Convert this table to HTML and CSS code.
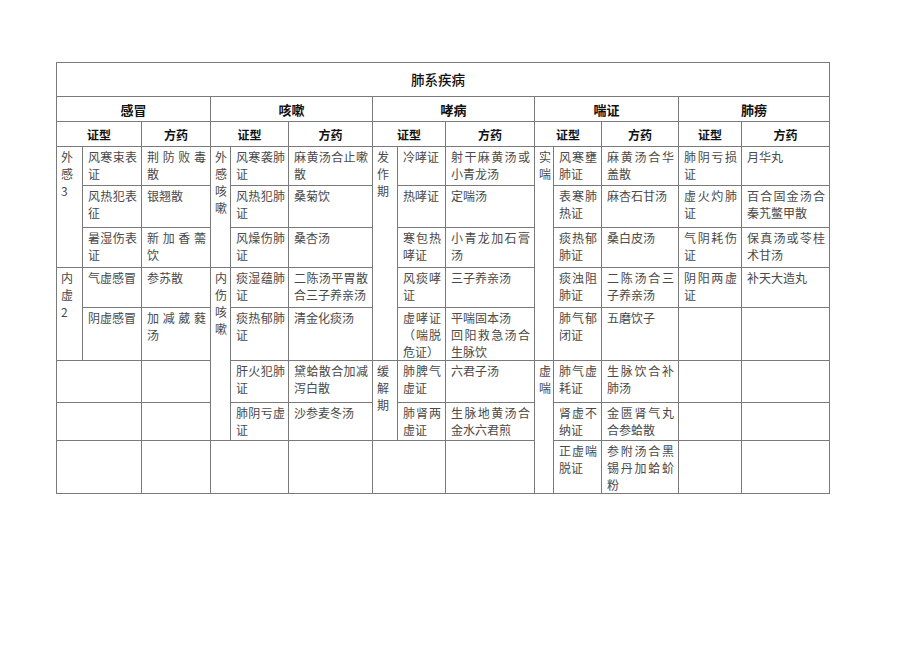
FILE: index.html
```html
<!DOCTYPE html>
<html lang="zh-CN">
<head>
<meta charset="utf-8">
<title>肺系疾病</title>
<link rel="stylesheet" href="styles.css">
</head>
<body>
<div class="page">
<table class="grid">
  <colgroup>
    <col class="w26"><col class="w59"><col class="w69">
    <col class="w20"><col class="w58"><col class="w84">
    <col class="w25"><col class="w48"><col class="w89">
    <col class="w19"><col class="w48"><col class="w77">
    <col class="w63"><col class="w88">
  </colgroup>
  <tr class="r-title"><td colspan="14" class="title">肺系疾病</td></tr>
  <tr class="r-group">
    <td colspan="3" class="gh">感冒</td>
    <td colspan="3" class="gh">咳嗽</td>
    <td colspan="3" class="gh">哮病</td>
    <td colspan="3" class="gh">喘证</td>
    <td colspan="2" class="gh">肺痨</td>
  </tr>
  <tr class="r-sub">
    <td colspan="2" class="sh">证型</td><td class="sh">方药</td>
    <td colspan="2" class="sh">证型</td><td class="sh">方药</td>
    <td colspan="2" class="sh">证型</td><td class="sh">方药</td>
    <td colspan="2" class="sh">证型</td><td class="sh">方药</td>
    <td class="sh">证型</td><td class="sh">方药</td>
  </tr>
  <tr class="r1">
    <td rowspan="3" class="nar">外感<br>3</td><td>风寒束表证</td><td>荆防败毒散</td>
    <td rowspan="3" class="nar">外感咳嗽</td><td class="tight">风寒袭肺证</td><td>麻黄汤合止嗽散</td>
    <td rowspan="5" class="nar">发作期</td><td>冷哮证</td><td>射干麻黄汤或小青龙汤</td>
    <td rowspan="5" class="nar">实喘</td><td>风寒壅肺证</td><td>麻黄汤合华盖散</td>
    <td>肺阴亏损证</td><td>月华丸</td>
  </tr>
  <tr class="r2">
    <td>风热犯表征</td><td>银翘散</td>
    <td class="tight">风热犯肺证</td><td>桑菊饮</td>
    <td>热哮证</td><td>定喘汤</td>
    <td>表寒肺热证</td><td>麻杏石甘汤</td>
    <td>虚火灼肺证</td><td>百合固金汤合秦艽鳖甲散</td>
  </tr>
  <tr class="r3">
    <td>暑湿伤表证</td><td>新加香薷饮</td>
    <td class="tight">风燥伤肺证</td><td>桑杏汤</td>
    <td>寒包热哮证</td><td>小青龙加石膏汤</td>
    <td>痰热郁肺证</td><td>桑白皮汤</td>
    <td>气阴耗伤证</td><td>保真汤或苓桂术甘汤</td>
  </tr>
  <tr class="r4">
    <td rowspan="2" class="nar">内虚<br>2</td><td>气虚感冒</td><td>参苏散</td>
    <td rowspan="4" class="nar">内伤咳嗽</td><td class="tight">痰湿蕴肺证</td><td>二陈汤平胃散合三子养亲汤</td>
    <td>风痰哮证</td><td>三子养亲汤</td>
    <td>痰浊阻肺证</td><td>二陈汤合三子养亲汤</td>
    <td>阴阳两虚证</td><td>补天大造丸</td>
  </tr>
  <tr class="r5">
    <td>阴虚感冒</td><td>加减葳蕤汤</td>
    <td class="tight">痰热郁肺证</td><td>清金化痰汤</td>
    <td>虚哮证（喘脱危证）</td><td>平喘固本汤<br>回阳救急汤合生脉饮</td>
    <td>肺气郁闭证</td><td>五磨饮子</td>
    <td></td><td></td>
  </tr>
  <tr class="r6">
    <td colspan="2"></td><td></td>
    <td class="tight">肝火犯肺证</td><td>黛蛤散合加减泻白散</td>
    <td rowspan="2" class="nar">缓解期</td><td>肺脾气虚证</td><td>六君子汤</td>
    <td rowspan="3" class="nar">虚喘</td><td>肺气虚耗证</td><td>生脉饮合补肺汤</td>
    <td></td><td></td>
  </tr>
  <tr class="r7">
    <td colspan="2"></td><td></td>
    <td class="tight">肺阴亏虚证</td><td>沙参麦冬汤</td>
    <td>肺肾两虚证</td><td>生脉地黄汤合金水六君煎</td>
    <td>肾虚不纳证</td><td>金匮肾气丸合参蛤散</td>
    <td></td><td></td>
  </tr>
  <tr class="r8">
    <td colspan="2"></td><td></td>
    <td colspan="2"></td><td></td>
    <td colspan="2"></td><td></td>
    <td>正虚喘脱证</td><td>参附汤合黑锡丹加蛤蚧粉</td>
    <td></td><td></td>
  </tr>
</table>
</div>
</body>
</html>
```
FILE: styles.css
```css
html, body {
  margin: 0;
  padding: 0;
  background: #ffffff;
}
.page {
  padding: 62px 0 0 56px;
}
.grid {
  border-collapse: collapse;
  table-layout: fixed;
  width: 774px;
  font-family: "Noto Sans CJK SC", "Noto Sans", sans-serif;
  font-size: 12px;
  line-height: 17px;
  color: #4a4a4a;
  border: 1px solid #7a7a7a;
}
.grid td {
  border: 1px solid #7a7a7a;
  padding: 1px 4px 0 5px;
  vertical-align: top;
  text-align: justify;
  overflow: visible;
}
.w26 { width: 26px; }
.w59 { width: 59px; }
.w69 { width: 69px; }
.w20 { width: 20px; }
.w58 { width: 58px; }
.w84 { width: 84px; }
.w25 { width: 25px; }
.w48 { width: 48px; }
.w89 { width: 89px; }
.w19 { width: 19px; }
.w77 { width: 77px; }
.w63 { width: 63px; }
.w88 { width: 88px; }

.r-title { height: 34px; }
.r-group { height: 25px; }
.r-sub { height: 25px; }
.r1 { height: 39px; }
.r2 { height: 42px; }
.r3 { height: 40px; }
.r4 { height: 40px; }
.r5 { height: 52px; }
.r6 { height: 42px; }
.r7 { height: 38px; }
.r8 { height: 52px; }

.grid td.title {
  text-align: center;
  vertical-align: middle;
  font-size: 13.5px;
  font-weight: 500;
  color: #111;
  padding: 0 10px 0 0;
}
.grid td.gh {
  text-align: center;
  vertical-align: middle;
  font-size: 13px;
  font-weight: 700;
  color: #111;
  padding: 0;
}
.grid td.sh {
  text-align: center;
  vertical-align: middle;
  font-size: 12px;
  font-weight: 700;
  color: #111;
  padding: 0;
}
.grid td.nar {
  padding: 1px 0 0 4px;
  text-align: left;
  word-break: break-all;
}
.grid td.tight {
  padding-right: 3px;
}
```
